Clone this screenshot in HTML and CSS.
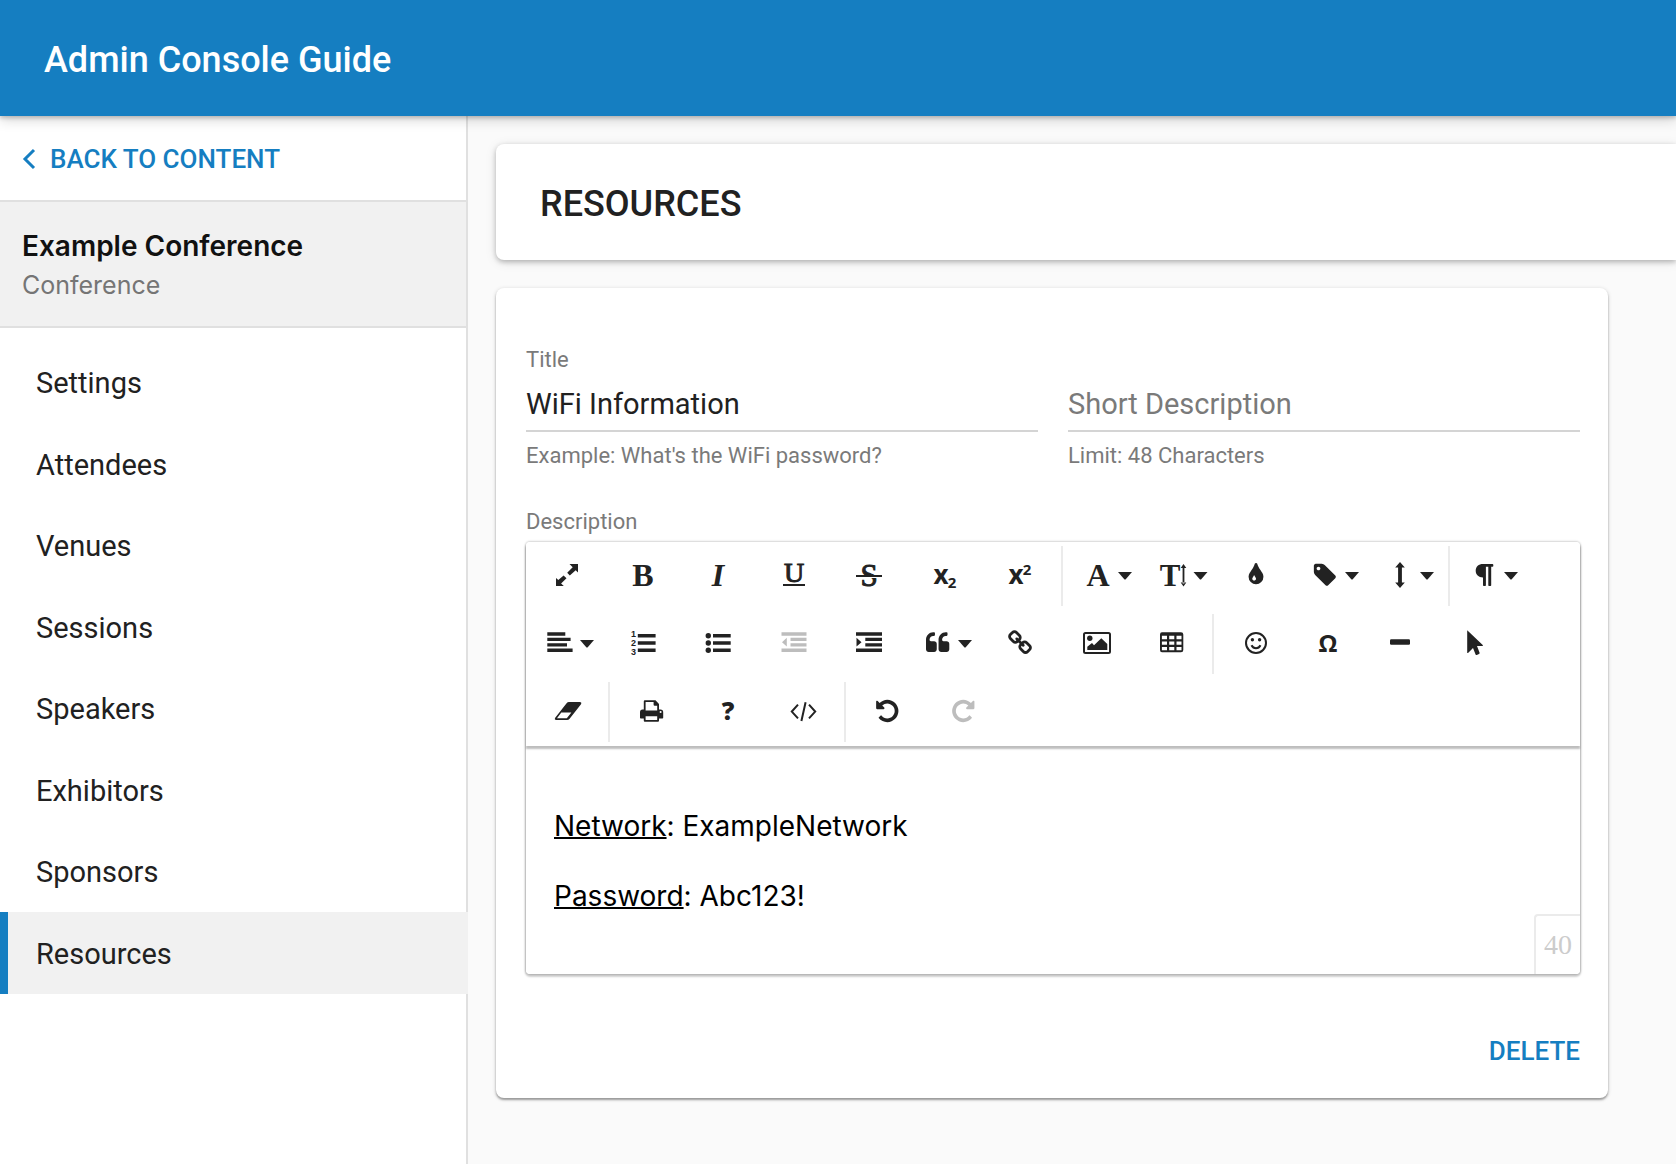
FILE: index.html
```html
<!DOCTYPE html>
<html lang="en">
<head>
<meta charset="utf-8">
<title>Admin Console Guide</title>
<meta name="viewport" content="width=device-width, initial-scale=1">
<link rel="stylesheet" href="styles.css">
</head>
<body>
<svg class="sprite" aria-hidden="true">
  <symbol id="caret" viewBox="0 0 14 8"><path d="M0 0H14L7.500 7.500H6.500Z"/></symbol>
</svg>
<header class="topbar">
  <h1 class="topbar-title">Admin Console Guide</h1>
</header>
<div class="layout">
  <aside class="sidebar">
    <a class="back" href="#content">
      <svg class="back-icon" viewBox="0 0 14 22" aria-hidden="true"><path d="M12 2L3 11L12 20"/></svg>
      BACK TO CONTENT
    </a>
    <div class="context">
      <div class="context-name">Example Conference</div>
      <div class="context-type">Conference</div>
    </div>
    <nav class="menu">
      <a class="menu-item" href="#settings">Settings</a>
      <a class="menu-item" href="#attendees">Attendees</a>
      <a class="menu-item" href="#venues">Venues</a>
      <a class="menu-item" href="#sessions">Sessions</a>
      <a class="menu-item" href="#speakers">Speakers</a>
      <a class="menu-item" href="#exhibitors">Exhibitors</a>
      <a class="menu-item" href="#sponsors">Sponsors</a>
      <a class="menu-item menu-item-active" href="#resources" aria-current="page">Resources</a>
    </nav>
  </aside>
  <main class="main">
    <div class="heading-card">
      <h2 class="heading">RESOURCES</h2>
    </div>
    <form class="form-card">
      <div class="fields">
        <div class="field">
          <label class="label" for="title">Title</label>
          <input class="input" id="title" type="text" value="WiFi Information">
          <div class="hint">Example: What's the WiFi password?</div>
        </div>
        <div class="field field-unlabelled">
          <input class="input" id="short" type="text" placeholder="Short Description" aria-label="Short Description">
          <div class="hint">Limit: 48 Characters</div>
        </div>
      </div>
      <div class="label editor-label" id="description-label">Description</div>
      <div class="editor">
        <div class="toolbar" role="toolbar" aria-label="Formatting">
          <div class="tool-row">
            <div class="tools">
              <button class="tool" type="button" aria-label="Fullscreen"><svg class="icon" viewBox="0 0 32 32"><path d="M18.500 4H27V12.500L24.700 10.200L18.800 15.400L16.200 12.800L21.700 7.200ZM5 18L7.300 20.100L12.600 15.500L15.500 18.300L10.100 23.500L12.800 26H5Z"/></svg></button>
              <button class="tool" type="button" aria-label="Bold"><svg class="icon serif" viewBox="0 0 32 32"><text x="16" y="26" font-size="32">B</text></svg></button>
              <button class="tool" type="button" aria-label="Italic"><svg class="icon serif italic" viewBox="0 0 32 32"><text x="16" y="26" font-size="32">I</text></svg></button>
              <button class="tool" type="button" aria-label="Underline"><svg class="icon serif medium" viewBox="0 0 32 32"><text x="16" y="22" font-size="28">U</text><path d="M5 24H27V26H5Z"/></svg></button>
              <button class="tool" type="button" aria-label="Strikethrough"><svg class="icon serif medium" viewBox="0 0 32 32"><text x="16" y="26" font-size="31">S</text><path class="paper" d="M3 17H29V18H3Z"/><path d="M3 15H29V17H3Z"/></svg></button>
              <button class="tool" type="button" aria-label="Subscript"><svg class="icon sans" viewBox="0 0 32 32"><text x="12" y="24" font-size="26">x</text><text x="23" y="28" font-size="15">2</text></svg></button>
              <button class="tool" type="button" aria-label="Superscript"><svg class="icon sans" viewBox="0 0 32 32"><text x="12" y="24" font-size="26">x</text><text x="23" y="15" font-size="15">2</text></svg></button>
            </div>
            <span class="divider"></span>
            <div class="tools">
              <button class="tool" type="button" aria-label="Font family"><svg class="icon icon-wide serif" viewBox="0 0 56 32"><text x="21" y="26" font-size="32">A</text><use href="#caret" x="41" y="12" width="14" height="8"/></svg></button>
              <button class="tool" type="button" aria-label="Font size"><svg class="icon icon-wide serif" viewBox="0 0 56 32"><text x="17" y="26" font-size="31">T</text><path d="M29.600 7H31.400V23.500H29.600ZM30.500 4L33.300 8H27.700ZM30.500 26.400L33.300 22.500H27.700Z"/><use href="#caret" x="40" y="12" width="15" height="8"/></svg></button>
              <button class="tool" type="button" aria-label="Text color"><svg class="icon" viewBox="-207 -137 2205 2205"><path d="M896 1152q0-36-20-69-1-1-15.500-22.500t-25.500-38-25-44-21-50.500q-4-16-21-16t-21 16q-7 23-21 50.500t-25 44-25.500 38-15.500 22.500q-20 33-20 69 0 53 37.500 90.500t90.500 37.500 90.500-37.500 37.500-90.500zm512-128q0 212-150 362t-362 150-362-150-150-362q0-145 81-275 6-9 62.500-90.500t101-151 99.500-178 83-201.500q9-30 34-47t51-17 51.500 17 33.500 47q28 93 83 201.500t99.500 178 101 151 62.500 90.500q81 127 81 275z"/></svg></button>
              <button class="tool" type="button" aria-label="Inline style"><svg class="icon icon-wide" viewBox="0 0 56 32"><g transform="translate(8 2) scale(.0145)"><path d="M576 448q0-53-37.500-90.500t-90.500-37.500-90.500 37.500-37.500 90.500 37.500 90.500 90.500 37.500 90.500-37.500 37.500-90.500zm1067 576q0 53-37 90l-491 492q-39 37-91 37-53 0-90-37l-715-716q-38-37-64.500-101t-26.500-117v-416q0-52 38-90t90-38h416q53 0 117 26.500t102 64.500l715 714q37 39 37 91z"/></g><use href="#caret" x="41" y="12" width="14" height="8"/></svg></button>
              <button class="tool" type="button" aria-label="Line height"><svg class="icon icon-wide" viewBox="0 0 56 32"><path d="M21 2L25.800 7.500H22.900V22.500H25.800L21 28L16.200 22.500H19.100V7.500H16.200Z"/><use href="#caret" x="41" y="12" width="14" height="8"/></svg></button>
            </div>
            <span class="divider"></span>
            <div class="tools">
              <button class="tool" type="button" aria-label="Paragraph format"><svg class="icon icon-wide" viewBox="0 0 56 32"><path d="M19 4H28.500Q29.300 4 29.300 5V6Q29.300 6.700 28.500 6.700H27.200V25.300Q27.200 26 26.500 26H25Q24.300 26 24.300 25.300V6.700H21.900V25.300Q21.900 26 21.200 26H19.800Q19 26 19 25.300V17.600C14.500 17.300 11.700 14.700 11.700 10.800C11.700 6.700 14.600 4 19 4Z"/><use href="#caret" x="40" y="12" width="14" height="8"/></svg></button>
            </div>
          </div>
          <div class="tool-row">
            <div class="tools">
              <button class="tool" type="button" aria-label="Align"><svg class="icon icon-wide" viewBox="0 0 56 32"><path d="M8.300 4.300H26.300V7.700H8.300ZM8.300 9.700H31.600V13.100H8.300ZM8.300 15.200H28V18.600H8.300ZM8.300 20.600H33.600V24H8.300Z"/><use href="#caret" x="41" y="12" width="14" height="8"/></svg></button>
              <button class="tool" type="button" aria-label="Ordered list"><svg class="icon sans" viewBox="0 0 32 32"><path d="M10.800 6H28.600V9.400H10.800ZM10.800 13.200H28.600V16.700H10.800ZM10.800 20.500H28.600V24H10.800Z"/><g class="digits"><text x="6.500" y="9" font-size="9">1</text><text x="6.500" y="18" font-size="9">2</text><text x="6.500" y="27" font-size="9">3</text></g></svg></button>
              <button class="tool" type="button" aria-label="Unordered list"><svg class="icon" viewBox="0 0 32 32"><path d="M11 6H28.700V9.400H11ZM11 13.200H28.700V16.700H11ZM11 20.500H28.700V24H11Z"/><circle cx="6.300" cy="7.700" r="2.700"/><circle cx="6.300" cy="15" r="2.700"/><circle cx="6.300" cy="22.200" r="2.700"/></svg></button>
              <button class="tool" type="button" aria-label="Decrease indent" disabled><svg class="icon" viewBox="0 0 32 32"><path d="M3.500 4.300H28.500V7.700H3.500ZM12.500 9.700H28.500V13.100H12.500ZM12.500 15.200H28.500V18.600H12.500ZM3.500 20.600H28.500V24H3.500ZM4 14.200L8.800 9.700V18.600Z"/></svg></button>
              <button class="tool" type="button" aria-label="Increase indent"><svg class="icon" viewBox="0 0 32 32"><path d="M3 4.300H29V7.700H3ZM12.300 9.700H29V13.100H12.300ZM12.300 15.200H29V18.600H12.300ZM3 20.600H29V24H3ZM8.500 14.200L3.500 9.700V18.600Z"/></svg></button>
              <button class="tool" type="button" aria-label="Quote"><svg class="icon icon-wide" viewBox="0 0 56 32"><g transform="translate(9 2.500) scale(.014)"><path id="quote-mark" d="M768 960v384q0 80-56 136t-136 56h-384q-80 0-136-56t-56-136v-704q0-104 40.500-198.500t109.500-163.500 163.500-109.500 198.500-40.500h64q26 0 45 19t19 45v128q0 26-19 45t-45 19h-64q-106 0-181 75t-75 181v32q0 40 28 68t68 28h224q80 0 136 56t56 136z"/><use href="#quote-mark" x="896"/></g><use href="#caret" x="41" y="12" width="14" height="8"/></svg></button>
              <button class="tool" type="button" aria-label="Insert link"><svg class="icon" viewBox="-207 -137 2205 2205"><path d="M1520 1216q0-40-28-68l-208-208q-28-28-68-28-42 0-72 32 3 3 19 18.500t21.500 21.500 15 19 13 25.500 3.500 27.500q0 40-28 68t-68 28q-15 0-27.500-3.500t-25.500-13-19-15-21.500-21.500-18.500-19q-33 31-33 73 0 40 28 68l206 207q27 27 68 27 40 0 68-26l147-146q28-28 28-67zm-703-705q0-40-28-68l-206-207q-28-28-68-28-39 0-68 27l-147 146q-28 28-28 67 0 40 28 68l208 208q27 27 68 27 42 0 72-31-3-3-19-18.500t-21.500-21.500-15-19-13-25.500-3.500-27.500q0-40 28-68t68-28q15 0 27.500 3.500t25.500 13 19 15 21.500 21.500 18.500 19q33-31 33-73zm895 705q0 120-85 203l-147 146q-83 83-203 83-121 0-204-85l-206-207q-83-83-83-203 0-123 88-209l-88-88q-86 88-208 88-120 0-204-84l-208-208q-84-84-84-204t85-203l147-146q83-83 203-83 121 0 204 85l206 207q83 83 83 203 0 123-88 209l88 88q86-88 208-88 120 0 204 84l208 208q84 84 84 204z"/></svg></button>
              <button class="tool" type="button" aria-label="Insert image"><svg class="icon" viewBox="0 0 32 32"><rect class="line" x="4" y="5" width="26" height="20" rx="1.500"/><circle cx="9.800" cy="10.300" r="2.700"/><path d="M7.300 22V18.700L12 15L14 17.300L21.300 10.300L27.300 16V22Z"/></svg></button>
              <button class="tool" type="button" aria-label="Insert table"><svg class="icon" viewBox="0 0 32 32"><path fill-rule="evenodd" d="M7 4.300H26Q28.300 4.300 28.300 6.500V22Q28.300 24.200 26 24.200H7Q5 24.200 5 22V6.500Q5 4.300 7 4.300ZM6.900 7.700V11.300H12V7.700ZM14.200 7.700V11.300H19.300V7.700ZM21.500 7.700V11.300H26.500V7.700ZM6.900 13.400V16.800H12V13.400ZM14.200 13.400V16.800H19.300V13.400ZM21.500 13.400V16.800H26.500V13.400ZM6.900 18.900V22.300H12V18.900ZM14.200 18.900V22.300H19.300V18.900ZM21.500 18.900V22.300H26.500V18.900Z"/></svg></button>
            </div>
            <span class="divider"></span>
            <div class="tools tools-compact">
              <button class="tool" type="button" aria-label="Emoticons"><svg class="icon" viewBox="0 0 32 32"><circle class="line" cx="17" cy="15" r="10"/><circle cx="13.400" cy="11.700" r="1.700"/><circle cx="20.600" cy="11.700" r="1.700"/><path class="line" d="M12.500 17.300Q14 20.300 17 20.300T21.500 17.300"/></svg></button>
              <button class="tool" type="button" aria-label="Special characters"><svg class="icon sans" viewBox="0 0 32 32"><text x="16" y="24" font-size="24">Ω</text></svg></button>
              <button class="tool" type="button" aria-label="Horizontal line"><svg class="icon" viewBox="0 0 32 32"><rect x="5" y="11.300" width="20" height="5.400" rx="1.200"/></svg></button>
              <button class="tool" type="button" aria-label="Select all"><svg class="icon" viewBox="0 0 32 32"><path d="M9.200 2.300L25 17.200Q25 18 24.300 18H19L21.600 24.800Q21.800 25.700 21 26L18.800 27Q17.900 27.200 17.600 26.500L15 20L10 25Q9.200 25.300 9.200 24.500Z"/></svg></button>
            </div>
          </div>
          <div class="tool-row">
            <div class="tools">
              <button class="tool" type="button" aria-label="Clear formatting"><svg class="icon" viewBox="0 0 32 32"><path fill-rule="evenodd" d="M18 6H28.700Q31 6 30 8.200L18.600 22.800Q17.600 24 16 24H5.400Q3 24 4.200 21.800L15.600 7.200Q16.500 6 18 6ZM10.300 16.500L6 22.200H15.800L20.400 16.500Z"/></svg></button>
            </div>
            <span class="divider"></span>
            <div class="tools">
              <button class="tool" type="button" aria-label="Print"><svg class="icon" viewBox="0 0 32 32"><path fill-rule="evenodd" d="M8.800 4.300H19.500L23 8V13.500H24.500Q27.200 13.500 27.200 16.200V21.800Q27.200 22.600 26.400 22.600H23V24.800Q23 25.700 22 25.700H8.700Q7.800 25.700 7.800 24.800V22.600H4.800Q4 22.600 4 21.800V16.200Q4 13.500 6.500 13.500H7.800V5.300Q7.800 4.300 8.800 4.300ZM9.600 6V14.600H21.200V9.800H18.700Q17.600 9.800 17.600 8.700V6ZM9.600 20.300V24H21.200V20.300ZM24.600 15A1 1 0 1 0 24.600 17A1 1 0 1 0 24.600 15Z"/></svg></button>
              <button class="tool" type="button" aria-label="Help"><svg class="icon sans heavy" viewBox="0 0 32 32"><text x="16" y="24" font-size="25">?</text></svg></button>
              <button class="tool" type="button" aria-label="Code view"><svg class="icon" viewBox="0 0 32 32"><path class="line" d="M11 8.700L4.800 15.600L11 22.400M22 8.700L28.200 15.600L22 22.400M18.600 6.300L14.400 25"/></svg></button>
            </div>
            <span class="divider"></span>
            <div class="tools">
              <button class="tool" type="button" aria-label="Undo"><svg class="icon" viewBox="-157 -137 2205 2205"><path id="arrow-turn" d="M1664 896q0 156-61 298t-164 245-245 164-298 61q-172 0-327-72.500t-264-204.500q-7-10-6.500-22.500t8.500-20.500l137-138q10-9 25-9 16 2 23 12 73 95 179 147t225 52q104 0 198.500-40.500t163.500-109.500 109.500-163.500 40.500-198.500-40.500-198.500-109.500-163.500-163.500-109.500-198.500-40.500q-98 0-188 35.500t-160 101.500l137 138q31 30 14 69-17 40-59 40h-448q-26 0-45-19t-19-45v-448q0-42 40-59 39-17 69 14l130 129q107-101 244.500-156.500t284.500-55.500q156 0 298 61t245 164 164 245 61 298z"/></svg></button>
              <button class="tool" type="button" aria-label="Redo" disabled><svg class="icon" viewBox="-157 -137 2205 2205"><use href="#arrow-turn" transform="translate(1792 0) scale(-1 1)"/></svg></button>
            </div>
          </div>
        </div>
        <div class="editor-body">
          <div class="editor-text" contenteditable="true" role="textbox" aria-multiline="true" aria-labelledby="description-label" spellcheck="false">
            <p><u>Network</u>: ExampleNetwork</p>
            <p><u>Password</u>: Abc123!</p>
          </div>
          <span class="counter">40</span>
        </div>
      </div>
      <div class="actions">
        <button class="delete" type="button">DELETE</button>
      </div>
    </form>
  </main>
</div>
</body>
</html>
```
FILE: styles.css
```css
* {
  box-sizing: border-box;
}

body {
  margin: 0;
  min-height: 100vh;
  display: flex;
  flex-direction: column;
  overflow-x: hidden;
  background: #fafafa;
  color: #212121;
  font-family: Roboto, "Liberation Sans", sans-serif;
  font-size: 29px;
}

h1, h2, p {
  margin: 0;
}

a {
  text-decoration: none;
}

button {
  border: 0;
  padding: 0;
  background: none;
  font: inherit;
  cursor: pointer;
}

.sprite {
  display: none;
}

.topbar {
  position: relative;
  z-index: 1;
  display: flex;
  align-items: center;
  height: 116px;
  padding: 4px 44px 0;
  background: #157ec1;
  color: #fff;
  box-shadow: 0 2px 4px rgba(0, 0, 0, 0.2), 0 4px 12px rgba(0, 0, 0, 0.16);
}

.topbar-title {
  font-size: 36px;
  font-weight: 500;
  line-height: 48px;
}

.layout {
  flex: 1;
  display: flex;
}

/* Sidebar */

.sidebar {
  flex: 0 0 468px;
  border-right: 2px solid #e0e0e0;
  background: #fff;
}

.back {
  display: flex;
  align-items: center;
  gap: 14px;
  height: 86px;
  padding: 2px 22px 0;
  border-bottom: 2px solid #e0e0e0;
  color: #157ec1;
  font-size: 26px;
  font-weight: 500;
}

.back-icon {
  width: 14px;
  height: 22px;
  fill: none;
  stroke: currentColor;
  stroke-width: 3;
}

.context {
  padding: 26px 22px 25px;
  border-bottom: 2px solid #e0e0e0;
  background: #f1f1f1;
  font-family: Inter, "Liberation Sans", sans-serif;
}

.context-name {
  color: #111;
  font-size: 28px;
  font-weight: 600;
  line-height: 36px;
}

.context-type {
  margin-top: 5px;
  color: #757575;
  font-size: 25px;
  line-height: 32px;
}

.menu {
  padding-top: 14px;
}

.menu-item {
  display: block;
  padding: 2px 0 0 36px;
  color: #212121;
  line-height: 79px;
}

.menu-item:nth-child(even) {
  line-height: 80px;
}

.menu-item-active {
  margin-right: -2px;
  padding-left: 28px;
  border-left: 8px solid #157ec1;
  background: #f1f1f1;
}

/* Main column */

.main {
  flex: 1;
  min-width: 0;
  padding: 28px;
}

.heading-card {
  margin-right: -28px;
  padding: 36px 44px 32px;
  border-radius: 8px 0 0 8px;
  background: #fff;
  box-shadow: 0 2px 5px rgba(0, 0, 0, 0.24), 0 2px 12px rgba(0, 0, 0, 0.1);
}

.heading {
  font-size: 36px;
  font-weight: 500;
  line-height: 48px;
}

.form-card {
  margin: 28px 40px 0 0;
  padding: 58px 28px 15px 30px;
  border-radius: 8px;
  background: #fff;
  box-shadow: 0 2px 2px rgba(0, 0, 0, 0.3), 0 1px 4px rgba(0, 0, 0, 0.18);
}

.fields {
  display: grid;
  grid-template-columns: 1fr 1fr;
  align-items: end;
  gap: 30px;
}

.label,
.hint {
  display: block;
  color: #7a7a7a;
  font-size: 22px;
  line-height: 28px;
}

.hint {
  margin-top: 10px;
}

.input {
  display: block;
  width: 100%;
  height: 58px;
  padding: 4px 0 0;
  border: 0;
  border-bottom: 2px solid #d4d4d4;
  border-radius: 0;
  outline: 0;
  background: none;
  color: #212121;
  font: inherit;
}

.input::placeholder {
  color: #7a7a7a;
  opacity: 1;
}

/* Rich text editor */

.editor-label {
  margin-top: 38px;
}

.editor {
  margin-top: 6px;
  border-radius: 4px;
  box-shadow: 0 2px 2px 1px rgba(0, 0, 0, 0.18), 0 0 2px 1px rgba(0, 0, 0, 0.16);
}

.toolbar {
  position: relative;
  border-radius: 4px 4px 0 0;
  padding: 0 3px;
  background: #fff;
  box-shadow: 0 3px 2px rgba(0, 0, 0, 0.26);
}

.tool-row {
  display: flex;
  align-items: center;
  height: 68px;
}

.tools {
  display: flex;
}

.tool {
  display: flex;
  align-items: center;
  justify-content: center;
  width: 76px;
  height: 60px;
  color: #222;
}

.tool:nth-child(even) {
  width: 75px;
}

.tools-compact .tool {
  width: 73px;
}

.tool:disabled {
  color: #bdbdbd;
}

.divider {
  width: 2px;
  height: 60px;
  margin: 0 4px 0 3px;
  background: #ebebeb;
}

.icon {
  width: 32px;
  height: 32px;
  overflow: visible;
  fill: currentColor;
  font-weight: 700;
  text-anchor: middle;
}

.icon-wide {
  width: 56px;
}

.icon.serif {
  font-family: "Liberation Serif", serif;
}

.icon.sans {
  font-family: "Open Sans", sans-serif;
}

.icon.heavy {
  font-weight: 800;
}

.icon.italic {
  font-style: italic;
}

.icon.medium text {
  font-weight: 400;
  stroke: currentColor;
  stroke-width: 1;
}

.icon .digits {
  font-family: "Liberation Sans", sans-serif;
}

.icon .line {
  fill: none;
  stroke: currentColor;
  stroke-width: 2;
}

.icon .paper {
  fill: #fff;
}

.editor-body {
  display: flex;
  align-items: flex-end;
  border-radius: 0 0 4px 4px;
  background: #fff;
}

.editor-text {
  flex: 1;
  min-width: 0;
  padding: 62px 28px 60px;
  outline: 0;
  color: #000;
  font-family: Inter, "Liberation Sans", sans-serif;
  font-size: 28px;
  line-height: 36px;
}

.editor-text p + p {
  margin-top: 34px;
}

.editor-text u {
  text-decoration-thickness: 2px;
  text-decoration-skip-ink: none;
}

.counter {
  height: 60px;
  padding: 0 8px;
  border-top: 2px solid #ebebeb;
  border-left: 2px solid #ebebeb;
  border-radius: 4px 0 0 0;
  color: #ccc;
  font-family: "Liberation Serif", serif;
  font-size: 28px;
  line-height: 58px;
}

.actions {
  display: flex;
  justify-content: flex-end;
  margin-top: 45px;
}

.delete {
  height: 64px;
  color: #157ec1;
  font-size: 26px;
  font-weight: 500;
}
```
